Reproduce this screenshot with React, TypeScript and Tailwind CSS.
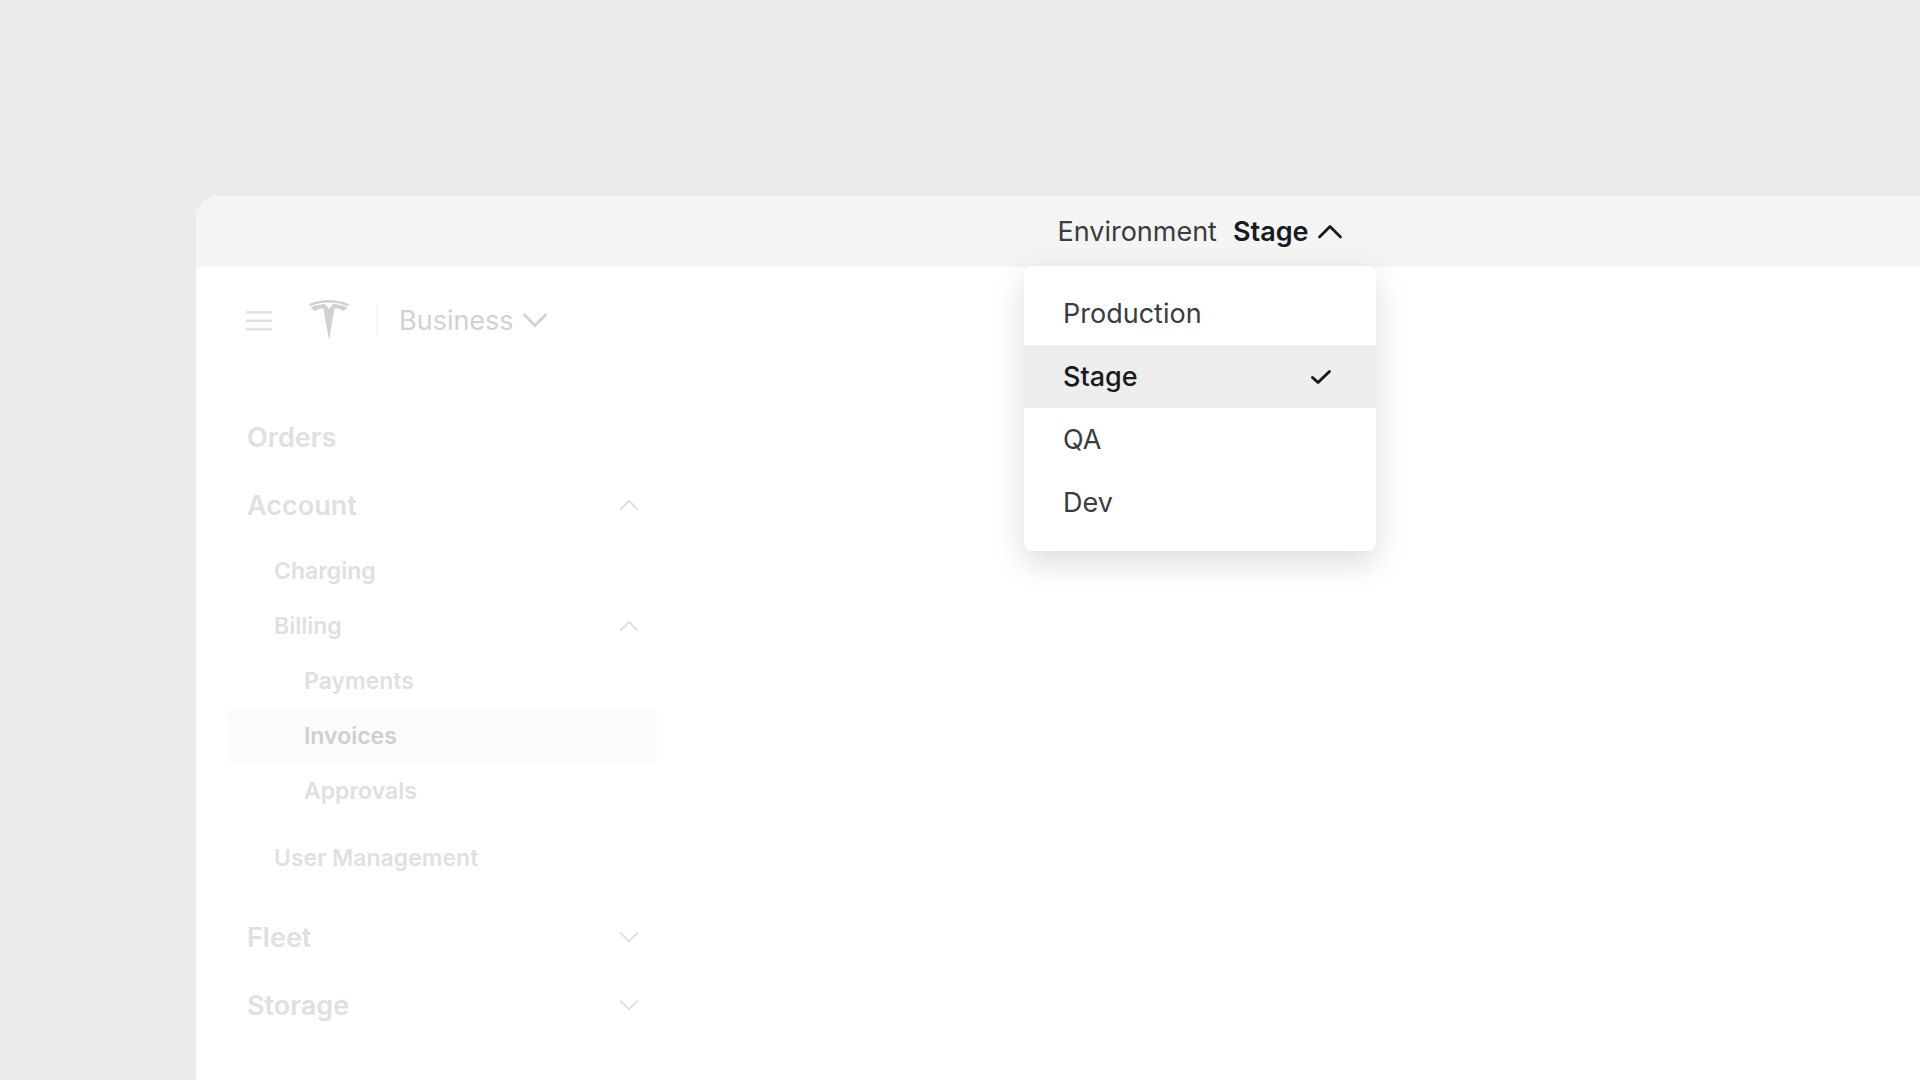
import type { ReactNode } from "react";
import { SiTesla } from "react-icons/si";

type ChevronProps = { up?: boolean; className: string; stroke: number };

function Chevron({ up, className, stroke }: ChevronProps) {
  return (
    <svg
      viewBox="0 0 26 16"
      fill="none"
      stroke="currentColor"
      strokeWidth={stroke}
      strokeLinecap="round"
      strokeLinejoin="round"
      className={className}
      aria-hidden="true"
    >
      <path d={up ? "M2.5 13 13 2.5 23.5 13" : "M2.5 3 13 13.5 23.5 3"} />
    </svg>
  );
}

function Group({ label, open, children }: { label: string; open?: boolean; children?: ReactNode }) {
  return (
    <li>
      <button
        type="button"
        aria-expanded={!!open}
        className="flex h-[68px] w-full items-center justify-between pr-[18px] pl-5 text-[27px] leading-[41px] font-semibold"
      >
        {label}
        <Chevron up={open} stroke={2.6} className="w-5" />
      </button>
      {children}
    </li>
  );
}

function NestedLink({ label, active }: { label: string; active?: boolean }) {
  return (
    <li>
      <a
        href="#"
        aria-current={active ? "page" : undefined}
        className={
          active
            ? "flex h-[55px] items-center rounded-lg bg-[#fbfbfb] pl-[77px] text-[#cfcfcf]"
            : "flex h-[55px] items-center pl-[77px]"
        }
      >
        {label}
      </a>
    </li>
  );
}

function Sidebar() {
  return (
    <nav aria-label="Main" className="mt-[63px] ml-[31px] w-[430px] text-[#dfe0e1]">
      <ul>
        <li>
          <a href="#" className="flex h-[68px] items-center pl-5 text-[27px] leading-[41px] font-semibold">
            Orders
          </a>
        </li>
        <Group label="Account" open>
          <ul className="mt-[5px] mb-[17px] text-[23px] leading-[35px] font-semibold">
            <li>
              <a href="#" className="flex h-[55px] items-center pl-[47px]">
                Charging
              </a>
            </li>
            <li>
              <button
                type="button"
                aria-expanded="true"
                className="flex h-[55px] w-full items-center justify-between pr-[18px] pl-[47px]"
              >
                Billing
                <Chevron up stroke={2.6} className="w-5" />
              </button>
              <ul>
                <NestedLink label="Payments" />
                <NestedLink label="Invoices" active />
                <NestedLink label="Approvals" />
              </ul>
            </li>
            <li className="mt-3">
              <a href="#" className="flex h-[55px] items-center pl-[47px]">
                User Management
              </a>
            </li>
          </ul>
        </Group>
        <Group label="Fleet" />
        <Group label="Storage" />
      </ul>
    </nav>
  );
}

const environments = ["Production", "Stage", "QA", "Dev"];

function EnvironmentBar({ current }: { current: string }) {
  return (
    <header className="relative flex h-[71px] items-center justify-center rounded-tl-[22px] bg-[#f4f4f4]">
      <button
        type="button"
        aria-haspopup="listbox"
        aria-expanded="true"
        className="flex items-center text-[27px] leading-[41px] text-[#393c41]"
      >
        Environment
        <span className="ml-4 font-semibold text-[#171a20]">{current}</span>
        <Chevron up stroke={2.8} className="ml-2 w-[26px] text-[#171a20]" />
      </button>
      <ul
        role="listbox"
        aria-label="Environment"
        className="absolute top-[70px] left-1/2 z-10 w-[352px] -translate-x-1/2 rounded-lg bg-white pt-4 pb-[17px] text-[27px] leading-[41px] shadow-[0_12px_32px_rgba(0,0,0,0.14)]"
      >
        {environments.map((name) => (
          <li key={name} role="option" aria-selected={name === current}>
            <button
              type="button"
              className={
                name === current
                  ? "flex h-[63px] w-full items-center justify-between bg-[#eeeeee] pr-11 pl-[39px] font-medium text-[#171a20]"
                  : "flex h-[63px] w-full items-center pl-[39px] text-[#393c41]"
              }
            >
              {name}
              {name === current && (
                <svg
                  viewBox="0 0 22 18"
                  fill="none"
                  stroke="currentColor"
                  strokeWidth="3"
                  strokeLinecap="round"
                  strokeLinejoin="round"
                  className="w-[22px]"
                  aria-hidden="true"
                >
                  <path d="M2.5 9.5 8 14.5 19.5 3.5" />
                </svg>
              )}
            </button>
          </li>
        ))}
      </ul>
    </header>
  );
}

export default function App() {
  return (
    <div className="flex min-h-screen flex-col overflow-hidden bg-[#ebebeb] pt-[196px] pl-[196px] font-['Inter',sans-serif]">
      <div className="-mr-[284px] flex-1 rounded-tl-[22px] bg-white">
        <EnvironmentBar current="Stage" />
        <div className="mt-[33px] flex h-10 items-center pl-12">
          <button type="button" aria-label="Menu" className="text-[#dfdfdf]">
            <svg
              viewBox="0 0 30 24"
              fill="none"
              stroke="currentColor"
              strokeWidth="2.4"
              strokeLinecap="round"
              className="w-[30px]"
              aria-hidden="true"
            >
              <path d="M3 4.2h24M3 12.8h24M3 21.4h24" />
            </svg>
          </button>
          <a href="#" aria-label="Tesla" className="ml-[35px] text-[#d1d1d1]">
            <SiTesla className="size-10" aria-hidden="true" />
          </a>
          <span className="ml-[27px] h-8 w-0.5 bg-[#f7f7f7]" />
          <button type="button" className="ml-[21px] flex items-center text-[27px] leading-[41px] text-[#d1d1d1]">
            Business
            <Chevron stroke={2.8} className="ml-2 w-[26px]" />
          </button>
        </div>
        <Sidebar />
      </div>
    </div>
  );
}
